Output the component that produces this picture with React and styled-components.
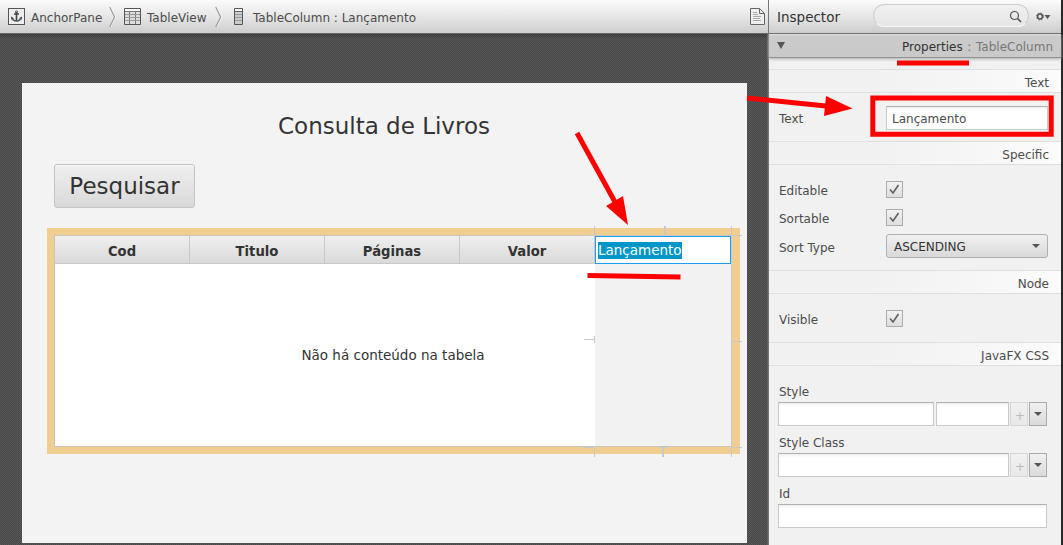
import React from "react";
import styled, { createGlobalStyle } from "styled-components";

const Global = createGlobalStyle`
  * { box-sizing: border-box; }
  body { margin: 0; font: 12px "DejaVu Sans", sans-serif; color: #4c4c4c; overflow: hidden; }
`;

const Window = styled.div`
  position: relative;
  display: grid;
  grid-template-columns: 768px 293px 2px;
  width: 1063px;
  height: 545px;
  background: #26282a;
  overflow: hidden;
  white-space: nowrap;
`;

const Editor = styled.main`
  display: flex;
  flex-direction: column;
  min-width: 0;
`;

const Toolbar = styled.header`
  display: flex;
  align-items: center;
  height: 34px;
  flex: none;
  background: linear-gradient(#fbfbfb, #e4e4e4 55%, #cdcdcd);
  border-bottom: 1px solid #686868;
`;

const Breadcrumb = styled(Toolbar)`
  padding: 0 3px 0 8px;
`;

const Crumb = styled.span`
  display: flex;
  align-items: center;
  height: 18px;
  width: ${(p) => p.$width};
  gap: ${(p) => p.$gap || "6px"};
  svg { flex: none; }
  span { padding-top: 2px; }
`;

const Chevron = styled.svg`
  flex: none;
  margin-right: ${(p) => p.$after};
`;

const DocumentIcon = styled.svg`
  margin-left: auto;
`;

const Canvas = styled.div`
  flex: 1;
  padding: 49px 21px 2px 22px;
  background-color: #505050;
  background-image: linear-gradient(rgba(45, 45, 45, 0.5), transparent 5px),
    repeating-conic-gradient(#464646 0 25%, #5a5a5a 0 50%);
  background-size: 100% 100%, 2px 2px;
  border-right: 1px solid #5e5e5e;
`;

const AnchorPane = styled.section`
  width: 725px;
  height: 460px;
  padding: 27px 7px 0 25px;
  background: #f3f3f3;
`;

const Title = styled.h1`
  margin: 0 0 21px;
  padding-left: 231px;
  height: 33px;
  line-height: 33px;
  font-size: 23px;
  font-weight: 400;
  color: #333;
`;

const SearchButton = styled.button`
  display: block;
  width: 141px;
  height: 44px;
  margin: 0 0 20px 7px;
  padding: 0 0 1px;
  border: 1px solid #c3c3c3;
  border-radius: 3px;
  background: linear-gradient(#efefef, #d9d9d9);
  box-shadow: inset 0 1px #f8f8f8;
  color: #333;
  font: 23px "DejaVu Sans", sans-serif;
`;

const Selection = styled.div`
  width: 693px;
  height: 226px;
  padding: 7px 8px 7px 7px;
  background: #f0ce90;
`;

const Table = styled.div`
  position: relative;
  display: grid;
  grid-template-columns: repeat(4, 135px) 1fr;
  grid-template-rows: 28px 1fr;
  height: 212px;
  width: 678px;
  border: 1px solid #cac5b9;
  background: #fff;
`;

const HeaderCell = styled.div`
  display: flex;
  align-items: center;
  justify-content: center;
  padding-top: 3px;
  background: linear-gradient(#efefef, #dadada);
  border-right: 1px solid #c8c8c8;
  border-bottom: 1px solid #c8c8c8;
  font-size: 13.2px;
  font-weight: 700;
  color: #333;
`;

const CellEditor = styled.div`
  display: flex;
  align-items: flex-start;
  height: 28px;
  padding: 5px 0 0 2px;
  border: 1px solid #1c9df2;
  background: #fff;
  span {
    height: 17px;
    line-height: 17px;
    background: #0096c9;
    color: #fff;
    font-size: 13.5px;
  }
`;

const EmptyColumn = styled.div`
  grid-column: 5;
  background: #f2f2f2;
`;

const Placeholder = styled.div`
  position: absolute;
  left: 0;
  right: 0;
  top: 111px;
  line-height: 16px;
  text-align: center;
  font-size: 13.5px;
  color: #333;
`;

const Inspector = styled.aside`
  display: flex;
  flex-direction: column;
  min-width: 0;
  background: #f1f1f1;
  border-left: 1px solid #777;
`;

const InspectorHeader = styled(Toolbar)`
  padding-left: 8px;
  font-size: 13.5px;
  color: #333;
  > span { padding-top: 1px; }
`;

const SearchBox = styled.div`
  display: flex;
  align-items: center;
  justify-content: flex-end;
  width: 156px;
  height: 23px;
  margin: -3px 7px 0 auto;
  padding: 2px 6px 0 0;
  border: 1px solid #cdcdcd;
  border-bottom-color: #f6f6f6;
  border-radius: 12px;
  background: linear-gradient(#f0f0f0, #e6e6e6);
`;

const Gear = styled.svg`
  flex: none;
  margin-right: 10px;
`;

const AccordionBar = styled.div`
  display: flex;
  align-items: center;
  height: 24px;
  padding: 2px 8px 0;
  background: linear-gradient(#dedede, #cbcbcb 2px, #c9c9c9);
  border-bottom: 1px solid #929292;
  box-shadow: 0 1px 3px #aaa;
  color: #333;
  > i { margin-bottom: 2px; }
  span { margin-left: auto; word-spacing: 0.8px; }
  em { font-style: normal; color: #777; }
`;

const Triangle = styled.i`
  border: ${(p) => p.$size || "4px"} solid transparent;
  border-top: ${(p) => p.$height || "4px"} solid #555;
  border-bottom: 0;
`;

const SectionHeading = styled.h2`
  height: 24px;
  margin: 0;
  padding: 2px 12px 0 0;
  line-height: 22px;
  text-align: right;
  font-size: 12px;
  font-weight: 400;
  border-top: 1px solid #e0e0e0;
  border-bottom: 1px solid #dfdfdf;
  background: linear-gradient(90deg, #f1f1f1 35%, #fbfbfb);
`;

const Properties = styled.div`
  display: flex;
  flex-direction: column;
  height: ${(p) => p.$height};
  padding: ${(p) => p.$top} 13px 0 10px;
  gap: ${(p) => p.$gap || 0};
`;

const PropertyRow = styled.div`
  display: grid;
  grid-template-columns: 107px 1fr;
  align-items: center;
  height: ${(p) => p.$height || "18px"};
  margin-top: ${(p) => p.$offset || 0};
  > span { padding-top: ${(p) => p.$labelTop || "2px"}; }
`;

const Field = styled.div`
  display: flex;
  align-items: center;
  flex: ${(p) => (p.$width ? "none" : 1)};
  width: ${(p) => p.$width || "auto"};
  margin-right: ${(p) => (p.$width ? "1px" : 0)};
  height: 24px;
  padding: 2px 0 0 5px;
  border: 1px solid #c9c9c9;
  border-top-color: #b0b0b0;
  background: linear-gradient(#f1f1f1, #fff 4px);
`;

const Check = styled.div`
  display: grid;
  place-items: center;
  align-self: start;
  width: 17px;
  height: 17px;
  border: 1px solid #acacac;
  background: linear-gradient(#f2f2f2, #dedede);
`;

const Combo = styled.div`
  display: flex;
  align-items: center;
  justify-content: space-between;
  height: 24px;
  padding: 1px 7px 0;
  border: 1px solid #b0b0b0;
  border-radius: 3px;
  background: linear-gradient(#f0f0f0, #d9d9d9);
  color: #333;
  i { margin-bottom: 2px; }
`;

const FieldGroup = styled.div`
  height: 51px;
  margin-left: -1px;
  label {
    display: block;
    height: 17px;
    line-height: 15px;
    padding-left: 1px;
  }
`;

const FieldRow = styled.div`
  display: flex;
  gap: 1px;
  width: 269px;
`;

const SmallButton = styled.button`
  display: grid;
  place-items: center;
  width: 18px;
  height: 24px;
  padding: ${(p) => (p.$faded ? "3px 0 0 2px" : "0")};
  border: 1px solid ${(p) => (p.$faded ? "#d6d6d6" : "#aaa")};
  background: linear-gradient(#f1f1f1, ${(p) => (p.$faded ? "#e8e8e8" : "#dadada")});
  color: #bcbcbc;
  font: 12px "DejaVu Sans", sans-serif;
`;

const Annotations = styled.svg`
  position: absolute;
  inset: 0;
  pointer-events: none;
`;

const AnchorIcon = () => (
  <svg width="17" height="17" viewBox="0 0 17 17" fill="none">
    <rect x=".5" y=".5" width="16" height="16" fill="#ededed" stroke="#555" />
    <path d="M8.5 4v9M6 6h5" stroke="#444" strokeWidth="1.6" />
    <path d="M4 9.500c.5 2.500 2.500 3.500 4.500 3.500s4-1 4.500-3.500" stroke="#555" strokeWidth="1.5" />
    <circle cx="8.5" cy="3.8" r="1" stroke="#444" />
    <path d="M3 11.500v-3l3 2zM14 11.500v-3l-3 2z" fill="#555" />
  </svg>
);

const TableIcon = () => (
  <svg width="17" height="17" viewBox="0 0 17 17" fill="none">
    <path d="M.5.5h16v16H.5z" fill="#ddd" stroke="#555" />
    <path d="M1 1h15v2H1z" fill="#fff" />
    <path d="M1 3.5h15M5.5 3v13M11.5 3v13" stroke="#777" />
    <path d="M1 6.5h15M1 9.5h15M1 12.5h15" stroke="#999" />
  </svg>
);

const ColumnIcon = () => (
  <svg width="9" height="17" viewBox="0 0 9 17" fill="none">
    <path d="M.5.5h8v16h-8z" fill="#ccc" stroke="#555" />
    <path d="M1 1h7v2H1z" fill="#fff" />
    <path d="M1 3.5h7" stroke="#666" />
    <path d="M1 6.5h7M1 9.5h7M1 12.5h7" stroke="#999" />
  </svg>
);

const Separator = ({ after }) => (
  <Chevron $after={after} width="8" height="22" viewBox="0 0 8 22" fill="none">
    <path d="M1.500 1 6.500 11l-5 10" stroke="#fff" />
    <path d="M.7 1 5.700 11l-5 10" stroke="#999" strokeWidth="1.2" />
  </Chevron>
);

const Checkbox = () => (
  <Check>
    <svg width="11" height="11" viewBox="0 0 11 11">
      <path d="M1 5.500 4 9 9.500 1" fill="none" stroke="#606060" strokeWidth="1.6" />
    </svg>
  </Check>
);

const AddButton = () => <SmallButton $faded>+</SmallButton>;
const MenuButton = () => (
  <SmallButton>
    <Triangle />
  </SmallButton>
);

export default function App() {
  return (
    <Window>
      <Global />
      <Editor>
        <Breadcrumb>
          <Crumb $width="101px"><AnchorIcon /><span>AnchorPane</span></Crumb>
          <Separator after="7px" />
          <Crumb $width="91px"><TableIcon /><span>TableView</span></Crumb>
          <Separator after="11px" />
          <Crumb $width="190px" $gap="10px"><ColumnIcon /><span>TableColumn : Lançamento</span></Crumb>
          <DocumentIcon width="15" height="17" viewBox="0 0 15 17" fill="none">
            <path d="M.5.5h9l5 5v11H.5z" fill="#eee" stroke="#666" />
            <path d="M9.5.5v5h5" stroke="#666" />
            <path d="M3 4.5h4M3 6.5h5M3 8.5h8M3 10.5h7M3 12.5h8" stroke="#aaa" />
          </DocumentIcon>
        </Breadcrumb>
        <Canvas>
          <AnchorPane>
            <Title>Consulta de Livros</Title>
            <SearchButton>Pesquisar</SearchButton>
            <Selection>
              <Table>
                {["Cod", "Titulo", "Páginas", "Valor"].map((name) => (
                  <HeaderCell key={name}>{name}</HeaderCell>
                ))}
                <CellEditor><span>Lançamento</span></CellEditor>
                <EmptyColumn />
                <Placeholder>Não há conteúdo na tabela</Placeholder>
              </Table>
            </Selection>
          </AnchorPane>
        </Canvas>
      </Editor>
      <Inspector>
        <InspectorHeader>
          <span>Inspector</span>
          <SearchBox>
            <svg width="13" height="13" viewBox="0 0 13 13" fill="none" stroke="#555">
              <circle cx="5.5" cy="5.5" r="4" strokeWidth="1.2" />
              <path d="m8.500 8.500 3.500 3.500" strokeWidth="1.7" />
            </svg>
          </SearchBox>
          <Gear width="15" height="10" viewBox="0 0 15 10">
            <circle cx="4" cy="4.5" r="2.4" fill="none" stroke="#555" strokeWidth="1.5" />
            <circle cx="4" cy="4.5" r="3.5" fill="none" stroke="#555" strokeDasharray="1.4 1.35" />
            <path d="M8.500 3h6l-3 4z" fill="#555" />
          </Gear>
        </InspectorHeader>
        <AccordionBar>
          <Triangle $height="7px" />
          <span>Properties <em>: TableColumn</em></span>
        </AccordionBar>
        <Properties $height="11px" $top="0" />
        <SectionHeading>Text</SectionHeading>
        <Properties $height="48px" $top="13px">
          <PropertyRow $height="24px"><span>Text</span><Field>Lançamento</Field></PropertyRow>
        </Properties>
        <SectionHeading>Specific</SectionHeading>
        <Properties $height="105px" $top="16px" $gap="10px">
          <PropertyRow><span>Editable</span><Checkbox /></PropertyRow>
          <PropertyRow><span>Sortable</span><Checkbox /></PropertyRow>
          <PropertyRow $height="24px" $offset="-3px" $labelTop="4px">
            <span>Sort Type</span>
            <Combo>ASCENDING<Triangle /></Combo>
          </PropertyRow>
        </Properties>
        <SectionHeading>Node</SectionHeading>
        <Properties $height="48px" $top="16px">
          <PropertyRow><span>Visible</span><Checkbox /></PropertyRow>
        </Properties>
        <SectionHeading>JavaFX CSS</SectionHeading>
        <Properties $height="179px" $top="19px">
          <FieldGroup>
            <label>Style</label>
            <FieldRow><Field $width="156px" /><Field /><AddButton /><MenuButton /></FieldRow>
          </FieldGroup>
          <FieldGroup>
            <label>Style Class</label>
            <FieldRow><Field /><AddButton /><MenuButton /></FieldRow>
          </FieldGroup>
          <FieldGroup>
            <label>Id</label>
            <FieldRow><Field /></FieldRow>
          </FieldGroup>
        </Properties>
      </Inspector>
      <Annotations width="1063" height="545" fill="none">
        <g stroke="#c9c9c9">
          <path d="M584 235.5h10M594.5 226v10M661 235.5h8M732 235.5h10M731.5 226v221" />
          <path d="M584 339.5h10M594.5 336v7M732 341.5h10M731.5 338v7" />
          <path d="M584 447.5h10M594.5 447v10M659 447.5h8M732 447.5h10M731.5 447v10" />
          <path d="M665 226v9M663 448v9" strokeWidth="2" />
        </g>
        <g stroke="#f00" strokeWidth="5">
          <path d="M577 133 615 202M747 98l79 8" />
          <path d="M587.5 275.500 680.5 277M897 63h72" />
          <path d="M872.8 97.900h178.400v36.300h-178.400z" />
        </g>
        <path d="m628 225-22-19 17-10zM852.5 108.500 824 116l2-20z" fill="#f00" />
      </Annotations>
    </Window>
  );
}
